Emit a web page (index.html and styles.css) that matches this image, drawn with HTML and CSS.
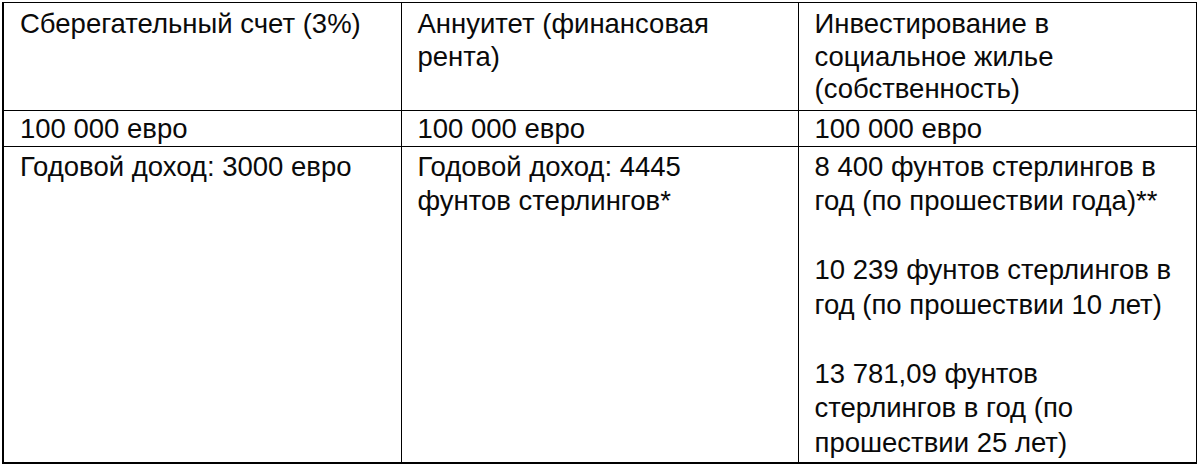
FILE: index.html
```html
<!DOCTYPE html>
<html lang="ru">
<head>
<meta charset="utf-8">
<title>Сравнение инвестиций</title>
<link rel="stylesheet" href="styles.css">
</head>
<body>
<table class="compare">
  <colgroup>
    <col class="c1"><col class="c2"><col class="c3">
  </colgroup>
  <tr class="head">
    <td>Сберегательный счет (3%)</td>
    <td>Аннуитет (финансовая<br>рента)</td>
    <td>Инвестирование в<br>социальное жилье<br>(собственность)</td>
  </tr>
  <tr class="sum">
    <td>100 000 евро</td>
    <td>100 000 евро</td>
    <td>100 000 евро</td>
  </tr>
  <tr class="last">
    <td>Годовой доход: 3000 евро</td>
    <td>Годовой доход: 4445<br>фунтов стерлингов*</td>
    <td>
      <p>8 400 фунтов стерлингов в<br>год (по прошествии года)**</p>
      <p>10 239 фунтов стерлингов в<br>год (по прошествии 10 лет)</p>
      <p>13 781,09 фунтов<br>стерлингов в год (по<br>прошествии 25 лет)</p>
    </td>
  </tr>
</table>
</body>
</html>
```
FILE: styles.css
```css
html, body {
  background: #fff;
}
body {
  margin: 2px 0 0 2px;
  font-family: "Liberation Sans", Arial, sans-serif;
  font-size: 27.5px;
  color: #0a0a0a;
}
.compare {
  border-collapse: collapse;
  width: 1194px;
  table-layout: fixed;
  border-left: 2px solid #000;
  border-bottom: 2px solid #000;
}
.compare col.c1 { width: 398px; }
.compare col.c2 { width: 397px; }
.compare col.c3 { width: 398px; }
.compare td {
  border: 1px solid #000;
  vertical-align: top;
  padding: 1px 4px 0 16px;
  line-height: 34px;
  white-space: nowrap;
}
.compare tr.head td {
  line-height: 32.5px;
  padding-top: 5px;
  padding-bottom: 4px;
}
.compare tr.sum td {
  padding-top: 1px;
  padding-bottom: 0;
}
.compare tr.last td {
  line-height: 34.5px;
  padding-top: 3px;
  padding-bottom: 2px;
}
.compare p {
  margin: 0 0 34.5px 0;
}
.compare p:last-child {
  margin-bottom: 0;
}
```
